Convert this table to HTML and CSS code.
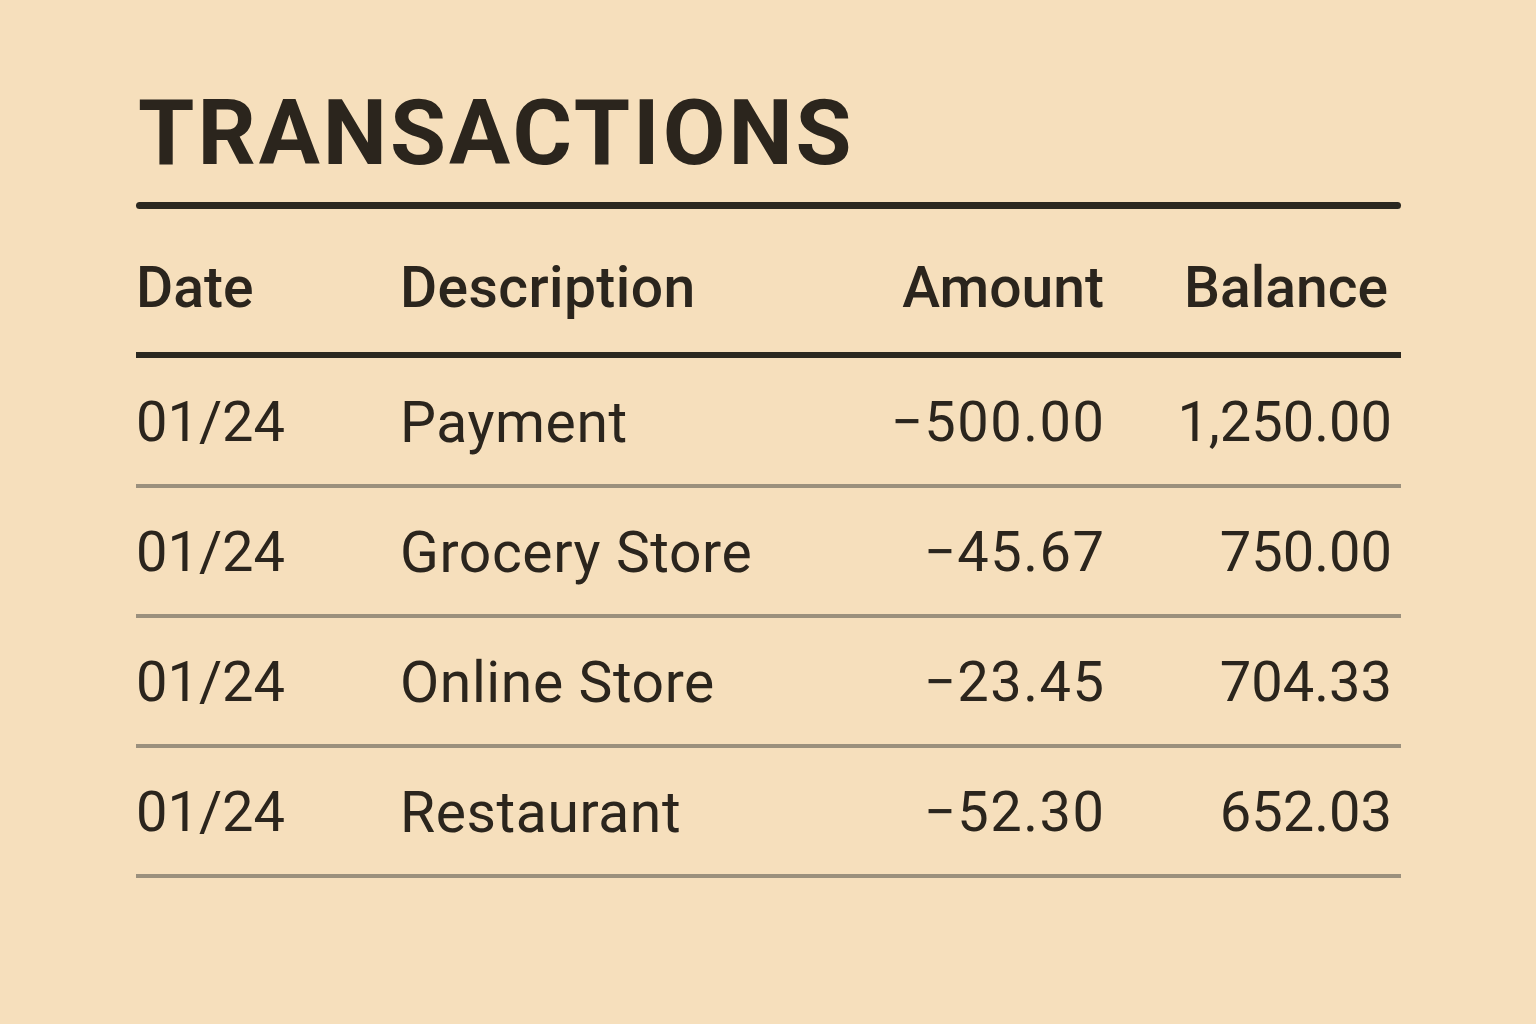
FILE: index.html
```html
<!DOCTYPE html>
<html lang="en">
<head>
<meta charset="utf-8">
<title>Transactions</title>
<link rel="stylesheet" href="styles.css">
</head>
<body>
<main class="sheet">
  <h1 class="title">TRANSACTIONS</h1>
  <div class="rule"></div>
  <div class="table">
    <div class="row head">
      <span class="c-date">Date</span>
      <span class="c-desc">Description</span>
      <span class="c-amt">Amount</span>
      <span class="c-bal">Balance</span>
    </div>
    <div class="row">
      <span class="c-date">01/24</span>
      <span class="c-desc">Payment</span>
      <span class="c-amt">−500.00</span>
      <span class="c-bal">1,250.00</span>
    </div>
    <div class="row">
      <span class="c-date">01/24</span>
      <span class="c-desc">Grocery Store</span>
      <span class="c-amt">−45.67</span>
      <span class="c-bal">750.00</span>
    </div>
    <div class="row">
      <span class="c-date">01/24</span>
      <span class="c-desc">Online Store</span>
      <span class="c-amt">−23.45</span>
      <span class="c-bal">704.33</span>
    </div>
    <div class="row">
      <span class="c-date">01/24</span>
      <span class="c-desc">Restaurant</span>
      <span class="c-amt">−52.30</span>
      <span class="c-bal">652.03</span>
    </div>
  </div>
</main>
</body>
</html>
```
FILE: styles.css
```css
html, body {
  margin: 0;
  padding: 0;
  background: #f6dfbc;
}
body {
  font-family: Roboto, "Liberation Sans", Arial, sans-serif;
  color: #2b251d;
  height: 1024px;
  overflow: hidden;
}
.sheet {
  width: 1265px;
  margin-left: 136px;
  padding-top: 88px;
}
.title {
  margin: 0;
  font-size: 91px;
  line-height: 1;
  font-weight: 700;
  letter-spacing: 3px;
  padding-left: 2px;
}
.rule {
  margin-top: 23px;
  height: 7px;
  border-radius: 4px;
  background: #2b2820;
}
.table {
  display: flex;
  flex-direction: column;
}
.row {
  display: grid;
  grid-template-columns: 264px 1fr 260px 288px;
  grid-template-rows: 57px;
  align-items: start;
  padding: 36px 9px 33px 0;
  font-size: 56px;
  line-height: 57px;
  border-bottom: 4px solid #9b907d;
}
.row.head {
  padding-top: 50px;
  padding-bottom: 36px;
  font-size: 57px;
  font-weight: 500;
  border-bottom: 6px solid #2b2820;
}
.c-date, .c-desc {
  text-align: left;
}
.c-amt, .c-bal {
  text-align: right;
}
.row .c-desc {
  font-size: 57px;
  letter-spacing: 0.6px;
}
.row .c-amt {
  letter-spacing: 1.5px;
  margin-right: -1.5px;
}
.row.head .c-desc,
.row.head .c-amt {
  font-size: 57px;
  letter-spacing: 0;
  margin-right: 0;
}
.row.head .c-desc {
  letter-spacing: 0.4px;
}
.head .c-bal {
  padding-right: 4px;
}
```
